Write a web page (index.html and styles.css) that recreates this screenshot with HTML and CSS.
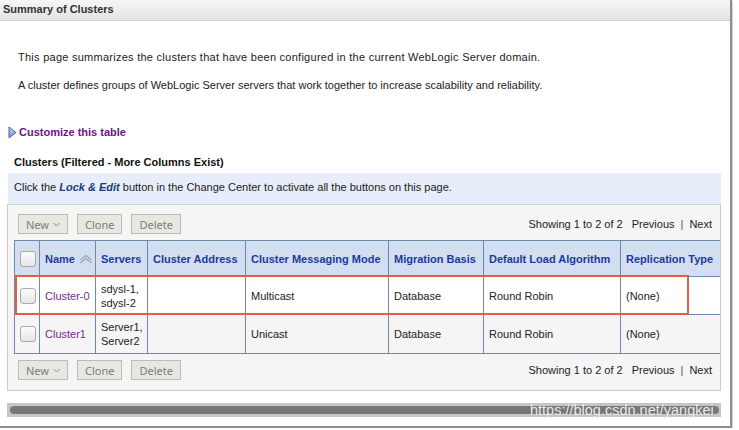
FILE: index.html
```html
<!DOCTYPE html>
<html>
<head>
<meta charset="utf-8">
<link rel="stylesheet" href="styles.css">
</head>
<body>
<div class="window">
  <div class="titlebar">Summary of Clusters</div>
  <div class="content">
    <p class="intro first">This page summarizes the clusters that have been configured in the current WebLogic Server domain.</p>
    <p class="intro">A cluster defines groups of WebLogic Server servers that work together to increase scalability and reliability.</p>
    <div class="customize">
      <svg class="tri" width="9" height="13" viewBox="0 0 9 13">
        <defs>
          <linearGradient id="tg" x1="0" y1="0" x2="0" y2="1">
            <stop offset="0" stop-color="#c9d8f2"/>
            <stop offset="1" stop-color="#6d8fcf"/>
          </linearGradient>
        </defs>
        <path d="M1 1 L8 6.5 L1 12 Z" fill="url(#tg)" stroke="#4a67a8" stroke-width="1" stroke-linejoin="round"/>
      </svg>
      <span class="custlink">Customize this table</span>
    </div>
    <div class="tabletitle">Clusters (Filtered - More Columns Exist)</div>
    <div class="infobar">Click the <b class="lock">Lock &amp; Edit</b> button in the Change Center to activate all the buttons on this page.</div>
    <div class="panel">
      <div class="controls">
        <div class="btns">
          <span class="btn">New <svg class="chev" width="7" height="5" viewBox="0 0 7 5"><path d="M0.5 1 L3.5 4 L6.5 1" fill="none" stroke="#8a8a8a" stroke-width="1"/></svg></span>
          <span class="btn">Clone</span>
          <span class="btn">Delete</span>
        </div>
        <div class="pager">Showing 1 to 2 of 2 <span class="pl">Previous</span><span class="sep">|</span><span class="pl">Next</span></div>
      </div>
      <div class="tablewrap">
        <table class="grid">
          <colgroup>
            <col class="c1"><col class="c2"><col class="c3"><col class="c4"><col class="c5"><col class="c6"><col class="c7"><col class="c8">
          </colgroup>
          <thead>
            <tr>
              <th class="cb"><span class="box"></span></th>
              <th>Name <svg class="sort" width="14" height="10" viewBox="0 0 14 10"><path d="M1.5 6 L7 1.5 L12.5 6" fill="none" stroke="#9aa4b4" stroke-width="1.2"/><path d="M1.5 9 L7 4.5 L12.5 9" fill="none" stroke="#9aa4b4" stroke-width="1.2"/></svg></th>
              <th>Servers</th>
              <th>Cluster Address</th>
              <th>Cluster Messaging Mode</th>
              <th>Migration Basis</th>
              <th>Default Load Algorithm</th>
              <th>Replication Type</th>
            </tr>
          </thead>
          <tbody>
            <tr class="r1">
              <td class="cb"><span class="box"></span></td>
              <td><span class="link">Cluster-0</span></td>
              <td>sdysl-1,<br>sdysl-2</td>
              <td></td>
              <td>Multicast</td>
              <td>Database</td>
              <td>Round Robin</td>
              <td>(None)</td>
            </tr>
            <tr class="r2">
              <td class="cb"><span class="box"></span></td>
              <td><span class="link">Cluster1</span></td>
              <td>Server1,<br>Server2</td>
              <td></td>
              <td>Unicast</td>
              <td>Database</td>
              <td>Round Robin</td>
              <td>(None)</td>
            </tr>
          </tbody>
        </table>
        <div class="highlight"></div>
      </div>
      <div class="controls bottom">
        <div class="btns">
          <span class="btn">New <svg class="chev" width="7" height="5" viewBox="0 0 7 5"><path d="M0.5 1 L3.5 4 L6.5 1" fill="none" stroke="#8a8a8a" stroke-width="1"/></svg></span>
          <span class="btn">Clone</span>
          <span class="btn">Delete</span>
        </div>
        <div class="pager">Showing 1 to 2 of 2 <span class="pl">Previous</span><span class="sep">|</span><span class="pl">Next</span></div>
      </div>
    </div>
    <div class="scrollbar"><div class="thumb"></div></div>
  </div>
  <div class="watermark">https://blog.csdn.net/yangkei</div>
</div>
</body>
</html>
```
FILE: styles.css
```css
html, body {
  margin: 0;
  padding: 0;
  background: #ffffff;
}
body {
  font-family: "Liberation Sans", Arial, sans-serif;
  font-size: 11px;
  color: #222;
}
.window {
  position: relative;
  width: 730px;
  height: 426px;
  border-right: 2px solid #8e8e8e;
  border-bottom: 2px solid #8e8e8e;
  box-shadow: 1px 1px 0 #d4d4d4;
  overflow: hidden;
}
.titlebar {
  height: 20px;
  line-height: 19px;
  padding-left: 3px;
  font-weight: bold;
  font-size: 11px;
  color: #333;
  background: linear-gradient(#f6f6f6, #e3e3e3);
  border-bottom: 1px solid #cfcfcf;
}
.content {
  padding: 0 9px 0 7px;
}
.intro {
  margin: 0 0 14px 11px;
  line-height: 14px;
  color: #222;
}
.intro.first {
  margin-top: 29px;
  letter-spacing: 0.26px;
}
.customize {
  display: flex;
  align-items: center;
  gap: 2px;
  margin-top: 33px;
  margin-left: 1px;
  height: 14px;
}
.tri {
  display: block;
}
.custlink {
  font-weight: bold;
  color: #6c1484;
  line-height: 14px;
}
.tabletitle {
  margin-top: 16px;
  margin-left: 7px;
  font-weight: bold;
  color: #111;
  line-height: 14px;
}
.infobar {
  margin-top: 4px;
  margin-left: 1px;
  height: 31px;
  line-height: 29px;
  padding-left: 6px;
  background: #e7eef9;
  color: #222;
}
.lock {
  font-style: italic;
  color: #1e3a78;
}
.panel {
  background: #f5f5f5;
  border: 1px solid #cdcdcd;
  padding: 9px 0 10px 6px;
}
.controls {
  display: flex;
  align-items: center;
  justify-content: space-between;
  height: 20px;
  padding-right: 8px;
}
.controls.bottom {
  margin-top: 6px;
}
.btns {
  display: flex;
  gap: 9px;
  margin-left: 4px;
}
.btn {
  display: inline-flex;
  align-items: center;
  height: 18px;
  padding: 0 7px;
  border: 1px solid #bcbcb4;
  background: #e8e8e2;
  color: #7b7b7b;
  font-family: "Noto Sans", "Open Sans", sans-serif;
  font-size: 11px;
}
.chev {
  margin-left: 4px;
  display: block;
}
.pager {
  color: #222;
}
.pl {
  margin-left: 6px;
}
.sep {
  margin-left: 6px;
  color: #555;
}
.tablewrap {
  position: relative;
  margin-top: 6px;
  overflow: hidden;
}
.grid {
  border-collapse: collapse;
  table-layout: fixed;
  width: 726px;
}
.c1 { width: 25px; }
.c2 { width: 56px; }
.c3 { width: 52px; }
.c4 { width: 98px; }
.c5 { width: 143px; }
.c6 { width: 95px; }
.c7 { width: 137px; }
.c8 { width: 120px; }
.grid th, .grid td {
  border: 1px solid #6f89ab;
  text-align: left;
  vertical-align: middle;
  padding: 0 5px;
  line-height: 14px;
}
.grid th {
  background: #d3dff0;
  color: #1b3b9c;
  font-weight: bold;
  height: 35px;
  white-space: nowrap;
}
.grid td {
  color: #222;
}
.r1 td {
  background: #ffffff;
  height: 37px;
}
.r2 td {
  background: #f5f5f5;
  height: 38px;
}
.grid .cb {
  padding: 0 0 0 5px;
}
.box {
  display: block;
  width: 14px;
  height: 14px;
  border: 1px solid #a9a9a9;
  border-radius: 3px;
  background: linear-gradient(#fbfbfb, #e6e6e6);
}
.sort {
  vertical-align: -1px;
  margin-left: 1px;
}
.link {
  color: #7a2a8e;
}
.highlight {
  position: absolute;
  left: 1px;
  top: 35px;
  width: 670px;
  height: 36px;
  border: 2px solid #e0623c;
}
.scrollbar {
  margin-top: 12px;
  height: 14px;
  background: #c6c6c6;
  padding: 3px 2px 3px 3px;
  box-sizing: border-box;
}
.thumb {
  height: 8px;
  border-radius: 4px;
  background: #787878;
}
.watermark {
  position: absolute;
  left: 530px;
  top: 402px;
  font-family: "Liberation Sans", Arial, sans-serif;
  font-size: 14.5px;
  color: rgba(255, 255, 255, 0.85);
  text-shadow: 0 0 1px rgba(120, 120, 120, 0.4);
}
```
